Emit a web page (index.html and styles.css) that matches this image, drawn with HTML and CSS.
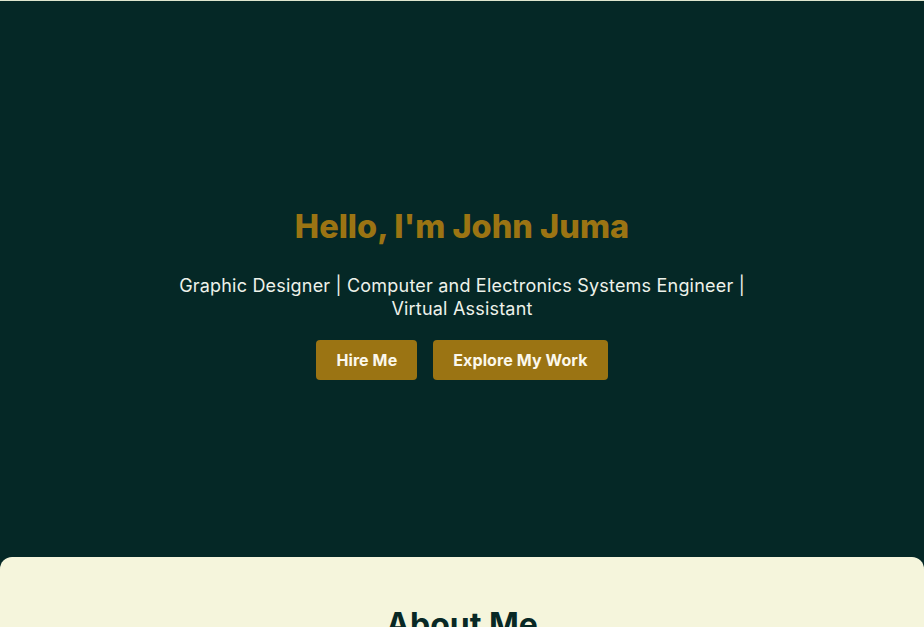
FILE: index.html
```html
<!DOCTYPE html>
<html lang="en">
<head>
<meta charset="utf-8">
<title>John Juma</title>
<link rel="stylesheet" href="styles.css">
</head>
<body>
<div class="topline"></div>
<section class="hero">
  <h1 class="hero-title">Hello, I'm John Juma</h1>
  <p class="hero-sub">Graphic Designer | Computer and Electronics Systems Engineer | Virtual Assistant</p>
  <div class="hero-actions">
    <a class="btn" href="#">Hire Me</a>
    <a class="btn" href="#">Explore My Work</a>
  </div>
</section>
<section class="about">
  <h2 class="about-title">About Me</h2>
</section>
</body>
</html>
```
FILE: styles.css
```css
* { box-sizing: border-box; }
html, body { margin: 0; padding: 0; }
body {
  font-family: Inter, "Noto Sans", sans-serif;
  background: #052826;
  overflow: hidden;
}
.topline { height: 1px; background: #dfe6cf; }
.hero {
  height: 556px;
  display: flex;
  flex-direction: column;
  align-items: center;
  justify-content: center;
  text-align: center;
  padding-top: 29px;
}
.hero-title {
  margin: 0;
  font-size: 32.5px;
  line-height: 40px;
  font-weight: 800;
  color: #9b7413;
}
.hero-sub {
  margin: 27px 0 0;
  max-width: 620px;
  font-size: 18px;
  line-height: 23px;
  letter-spacing: 0.2px;
  color: #eef2ea;
}
.hero-actions {
  display: flex;
  gap: 16px;
  margin-top: 20px;
}
.btn {
  display: inline-block;
  background: #9b7413;
  color: #fbf8ec;
  text-decoration: none;
  font-weight: 700;
  font-size: 16px;
  line-height: 20px;
  padding: 10px 20px;
  border-radius: 4px;
  letter-spacing: 0.1px;
}
.about {
  background: #f5f5dc;
  border-radius: 12px 12px 0 0;
  padding-top: 48px;
  height: 300px;
  text-align: center;
}
.about-title {
  margin: 0;
  font-size: 32px;
  line-height: 40px;
  font-weight: 700;
  color: #082825;
}
```
